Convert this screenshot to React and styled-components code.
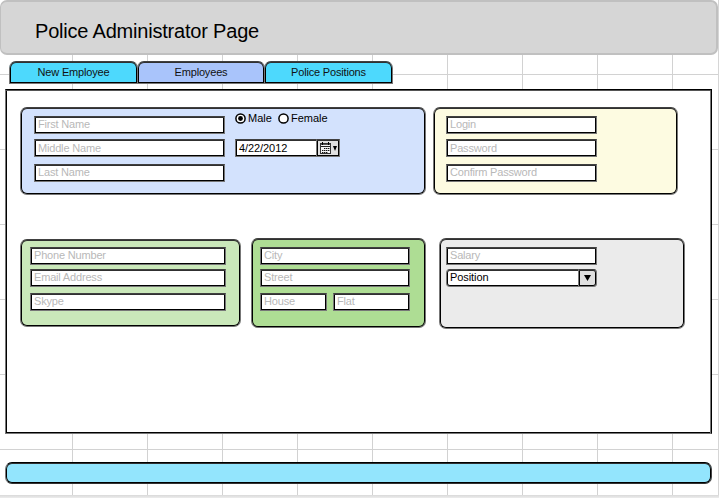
import React from "react";
import styled, { createGlobalStyle, css } from "styled-components";

const GlobalStyle = createGlobalStyle`
  *, *::before, *::after { box-sizing: border-box; }
  body { margin: 0; background: #fff; overflow: hidden; }
`;

const outline = css`
  border: 1px solid;
  border-color: #404040 #777 #777 #777;
  box-shadow: inset 0 1px #303030, inset 1px 0 #000, inset -1px 0 #000, inset 0 -1px #000;
`;

const Page = styled.div`
  width: 719px;
  height: 498px;
  display: flex;
  flex-direction: column;
  font-family: "Liberation Sans", Arial, sans-serif;
  font-size: 11px;
  letter-spacing: -0.18px;
  color: #000;
  background:
    linear-gradient(#d9d9d9, #ececec) 0 495px / 100% 3px no-repeat,
    linear-gradient(#d6d6d6, #d6d6d6) 718px 0 / 1px 100% no-repeat,
    linear-gradient(90deg, #d2d2d2 1px, transparent 1px) 72px 0 / 75px 75px,
    linear-gradient(#d2d2d2 1px, transparent 1px) 0 74px / 75px 75px,
    #fff;
`;

const Header = styled.header`
  width: 718px;
  height: 55px;
  flex: none;
  padding: 19px 0 0 34px;
  border: 2px solid #c0c0c0;
  border-left-width: 1px;
  border-radius: 7px;
  background: #d6d6d6;
`;

const Title = styled.h1`
  margin: 0;
  font-size: 20px;
  line-height: 20px;
  font-weight: 400;
  letter-spacing: -0.2px;
  white-space: nowrap;
`;

const Tabs = styled.nav`
  display: flex;
  height: 23px;
  margin: 6px 0 0 9px;
`;

const Tab = styled.div`
  ${outline}
  width: ${(p) => p.$width}px;
  margin-right: -1px;
  border-radius: 7px 7px 0 0;
  background: ${(p) => p.$color};
  color: #111;
  line-height: 21px;
  text-align: center;
`;

const Main = styled.main`
  width: 707px;
  height: 345px;
  margin: 5px 0 0 5px;
  padding: 17px 0 0 14px;
  background: #fff;
  border: 1px solid;
  border-color: #000 #000 #777 #777;
  box-shadow: inset 0 1px #555, inset 1px 0 #000, inset -1px 0 #777, inset 0 -1px #000;
`;

const PanelRow = styled.div`
  display: flex;
  height: ${(p) => p.$height}px;
  align-items: flex-start;
`;

const Panel = styled.section`
  ${outline}
  width: ${(p) => p.$width}px;
  height: ${(p) => p.$height}px;
  margin: ${(p) => p.$drop || 0}px 0 0 ${(p) => p.$gap || 0}px;
  padding: ${(p) => p.$pad};
  border-radius: 7px;
  background: ${(p) => p.$color};
  display: flex;
  gap: 10px;
`;

const Stack = styled.div`
  display: grid;
  grid-template-rows: ${(p) => p.$rows};
  align-content: start;
`;

const Line = styled.div`
  display: flex;
  gap: 6px;
`;

const Field = styled.div`
  ${outline}
  width: ${(p) => p.$width}px;
  height: 18px;
  padding-left: 3px;
  background: #fff;
  color: ${(p) => (p.$filled ? "#000" : "#b8b8b8")};
  line-height: ${(p) => (p.$low ? 17 : 15)}px;
  letter-spacing: ${(p) => (p.$filled ? "-0.08px" : "-0.18px")};
  white-space: nowrap;
  display: flex;
  justify-content: space-between;
  border-radius: ${(p) => p.$radius || 0}px;
`;

const FieldButton = styled.div`
  ${outline}
  width: ${(p) => p.$width}px;
  height: 18px;
  margin: -1px -1px 0 0;
  display: flex;
  align-items: center;
  justify-content: center;
  gap: 2px;
  background: #e0e0e0;
  border-radius: ${(p) => (p.$round ? "0 4px 4px 0" : "0")};
`;

const PersonalDetails = styled.div`
  display: flex;
  flex-direction: column;
  gap: 11px;
  margin-top: -4px;
`;

const Choices = styled.div`
  display: flex;
  height: 13px;
  flex: none;
  margin-bottom: 3px;
`;

const Choice = styled.div`
  display: flex;
  flex: none;
  gap: 2px;
  width: 43px;
  line-height: 13px;
  letter-spacing: 0;
`;

const Footer = styled.footer`
  ${outline}
  width: 707px;
  height: 22px;
  margin: 28px 0 0 5px;
  border-radius: 7px;
  border-color: #000 #444 #333 #777;
  background: #93e5fd;
`;

const Icon = styled.svg`
  flex: none;
  display: block;
`;

const Radio = ({ checked }) => (
  <Icon width="11" height="13" viewBox="0 0 11 13">
    <circle cx="5.5" cy="6.5" r="4.6" fill="#fff" stroke="#000" strokeWidth="1.5" />
    {checked && <circle cx="5.5" cy="6.5" r="2.4" />}
  </Icon>
);

const Calendar = () => (
  <Icon width="11" height="12" viewBox="0 0 11 12">
    <rect x=".5" y="1.5" width="10" height="10" fill="#f4f4f4" stroke="#333" />
    <path d="M1 2.5h9" stroke="#555" />
    <path d="M1 4.5h9" stroke="#222" />
    <path d="M2.5 0v3M8.5 0v3" stroke="#000" />
    <path d="M4 6.5h5.5M2 8.5h7.5M2 10.5h5.5" stroke="#111" strokeDasharray="1.4 .6" />
  </Icon>
);

const Arrow = ({ width, height }) => (
  <Icon width={width} height={height} viewBox="0 0 6 6" preserveAspectRatio="none">
    <path d="M0 0h6L3 6z" />
  </Icon>
);

const upperRows = "23px 25px 18px";
const lowerRows = "22px 24px 18px";

export default function App() {
  return (
    <Page>
      <GlobalStyle />
      <Header>
        <Title>Police Administrator Page</Title>
      </Header>
      <Tabs>
        <Tab $width={129} $color="#4dd9fd">New Employee</Tab>
        <Tab $width={128} $color="#a9c4fb">Employees</Tab>
        <Tab $width={129} $color="#4dd9fd">Police Positions</Tab>
      </Tabs>
      <Main>
        <PanelRow $height={131}>
          <Panel $width={406} $height={88} $color="#d3e2fd" $pad="8px 0 0 13px">
            <Stack $rows={upperRows}>
              <Field $width={191}>First Name</Field>
              <Field $width={191} $low>Middle Name</Field>
              <Field $width={191}>Last Name</Field>
            </Stack>
            <PersonalDetails>
              <Choices>
                <Choice><Radio checked />Male</Choice>
                <Choice><Radio />Female</Choice>
              </Choices>
              <Field $width={105} $filled $low>
                4/22/2012
                <FieldButton $width={24}>
                  <Calendar />
                  <Arrow width={4} height={5} />
                </FieldButton>
              </Field>
            </PersonalDetails>
          </Panel>
          <Panel $width={245} $height={88} $gap={7} $color="#fdfbe1" $pad="8px 0 0 12px">
            <Stack $rows={upperRows}>
              <Field $width={151}>Login</Field>
              <Field $width={151} $low>Password</Field>
              <Field $width={151}>Confirm Password</Field>
            </Stack>
          </Panel>
        </PanelRow>
        <PanelRow $height={91}>
          <Panel $width={221} $height={88} $drop={1} $color="#cae8ba" $pad="7px 0 0 9px">
            <Stack $rows={lowerRows}>
              <Field $width={196}>Phone Number</Field>
              <Field $width={196}>Email Address</Field>
              <Field $width={196}>Skype</Field>
            </Stack>
          </Panel>
          <Panel $width={175} $height={90} $gap={10} $color="#aedd94" $pad="8px 0 0 8px">
            <Stack $rows={lowerRows}>
              <Field $width={150}>City</Field>
              <Field $width={150}>Street</Field>
              <Line>
                <Field $width={67}>House</Field>
                <Field $width={77}>Flat</Field>
              </Line>
            </Stack>
          </Panel>
          <Panel $width={246} $height={91} $gap={13} $color="#ebebeb" $pad="8px 0 0 6px">
            <Stack $rows={lowerRows}>
              <Field $width={151}>Salary</Field>
              <Field $width={151} $filled $radius={4}>
                Position
                <FieldButton $width={19} $round>
                  <Arrow width={7} height={6} />
                </FieldButton>
              </Field>
            </Stack>
          </Panel>
        </PanelRow>
      </Main>
      <Footer />
    </Page>
  );
}
